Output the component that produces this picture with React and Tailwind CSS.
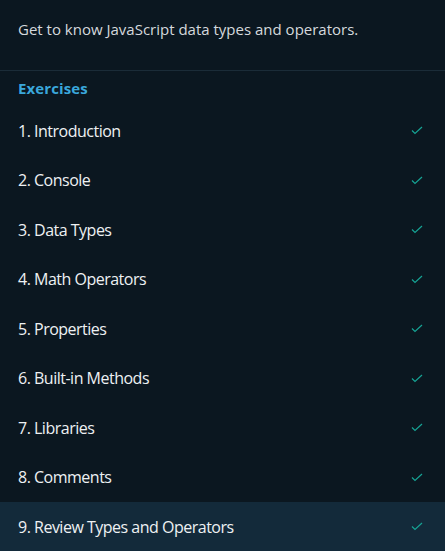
const exercises = [
  'Introduction',
  'Console',
  'Data Types',
  'Math Operators',
  'Properties',
  'Built-in Methods',
  'Libraries',
  'Comments',
  'Review Types and Operators',
];

function Check() {
  return (
    <svg width="12" height="9" viewBox="0 0 12 9" fill="none" className="shrink-0">
      <path d="M1 4.5 L4 7.5 L11 1" stroke="#16a394" strokeWidth="1.2" />
    </svg>
  );
}

export default function App() {
  const active = 8;
  return (
    <div
      className="w-[445px] h-[551px] overflow-hidden bg-[#0b1720] text-[#e8ebee]"
      style={{ fontFamily: '"Open Sans", "Noto Sans", sans-serif' }}
    >
      {/* Lesson description */}
      <div className="h-[71px] px-[18px] pt-[16px] border-b border-[#1b2c38]">
        <p className="text-[15px] leading-[26px] tracking-[0px] text-[#d5d9dd]">
          Get to know JavaScript data types and operators.
        </p>
      </div>

      {/* Exercises */}
      <div className="h-[35px] px-[18px] flex items-center">
        <h3 className="text-[15px] font-bold text-[#3aa7db] tracking-[0.1px]">Exercises</h3>
      </div>

      <ul>
        {exercises.map((title, idx) => (
          <li
            key={idx}
            className={
              'h-[49.5px] pl-[18px] pr-[22px] flex items-center justify-between ' +
              (idx === active ? 'bg-[#132a3a]' : '')
            }
          >
            <span className="text-[16px] tracking-[-0.5px] text-[#eef1f3]">
              {idx + 1}. {title}
            </span>
            <Check />
          </li>
        ))}
      </ul>
    </div>
  );
}
